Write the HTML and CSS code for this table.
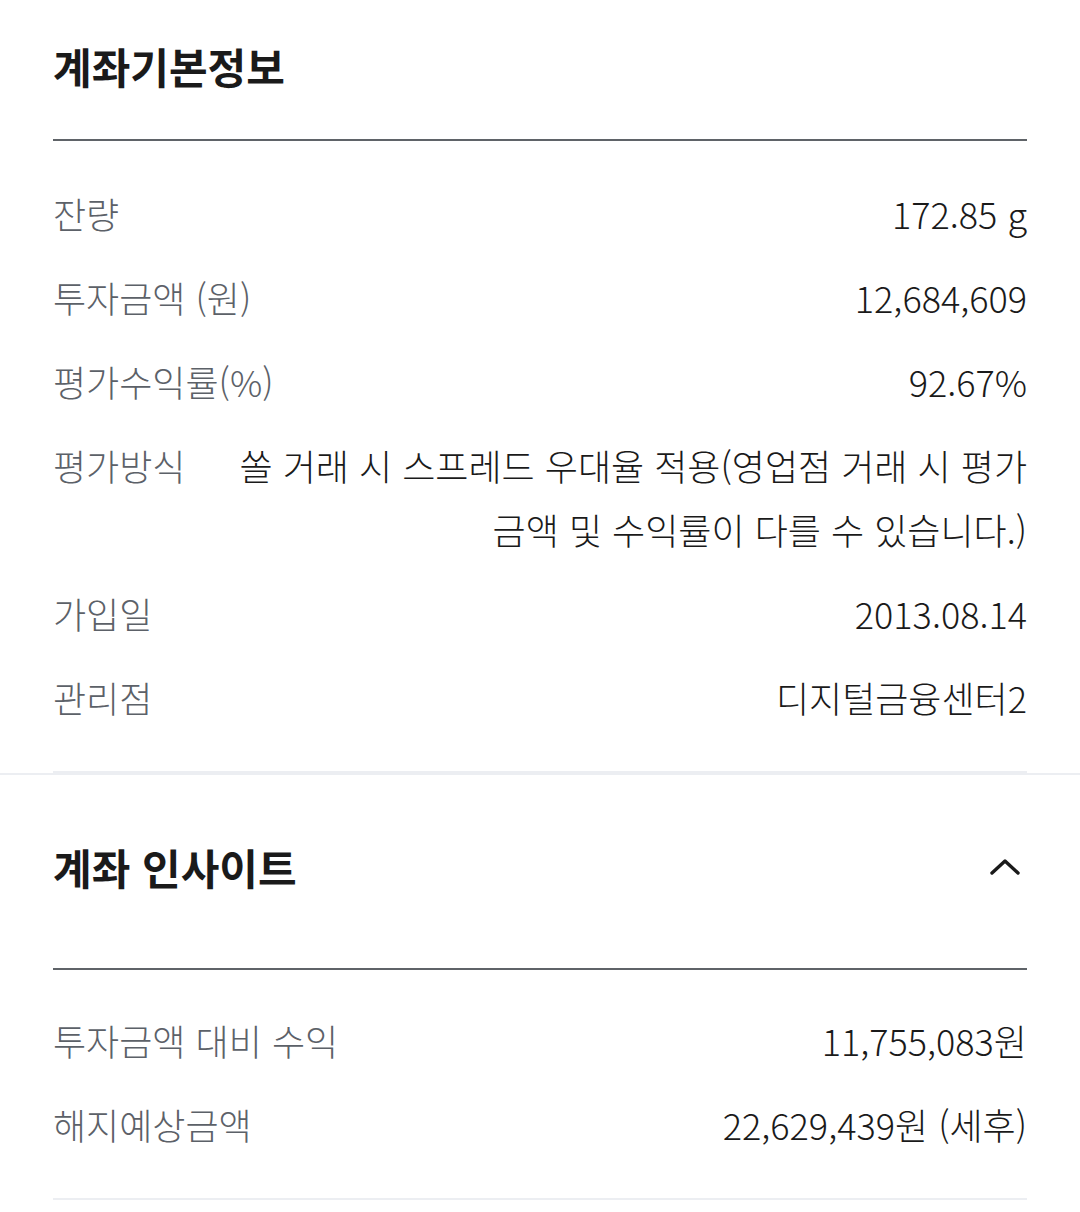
FILE: index.html
```html
<!DOCTYPE html>
<html lang="ko">

<head>
    <meta charset="UTF-8" />
    <meta name="viewport" content="width=device-width, initial-scale=1.0" />
    <title>계좌기본정보</title>
    <link rel="stylesheet" href="styles.css">
</head>

<body>
    <section class="section basic">
        <div class="section-head">
            <h2>계좌기본정보</h2>
        </div>
        <dl class="info-list">
            <div class="info-row">
                <dt>잔량</dt>
                <dd>172.85 g</dd>
            </div>
            <div class="info-row">
                <dt>투자금액 (원)</dt>
                <dd>12,684,609</dd>
            </div>
            <div class="info-row">
                <dt>평가수익률(%)</dt>
                <dd>92.67%</dd>
            </div>
            <div class="info-row">
                <dt>평가방식</dt>
                <dd class="wide">쏠 거래 시 스프레드 우대율 적용(영업점 거래 시 평가 금액 및 수익률이 다를 수 있습니다.)</dd>
            </div>
            <div class="info-row">
                <dt>가입일</dt>
                <dd>2013.08.14</dd>
            </div>
            <div class="info-row">
                <dt>관리점</dt>
                <dd>디지털금융센터2</dd>
            </div>
        </dl>
    </section>

    <section class="section insight">
        <div class="section-head">
            <h2>계좌 인사이트</h2>
            <button class="toggle" type="button" aria-label="접기">
                <svg width="34" height="20" viewBox="0 0 34 20">
                    <path d="M3 16 L16 4 L29 16" fill="none" stroke="#1a1a1a" stroke-width="3.4" stroke-linecap="round" stroke-linejoin="round" />
                </svg>
            </button>
        </div>
        <dl class="info-list">
            <div class="info-row">
                <dt>투자금액 대비 수익</dt>
                <dd>11,755,083원</dd>
            </div>
            <div class="info-row">
                <dt>해지예상금액</dt>
                <dd>22,629,439원 (세후)</dd>
            </div>
        </dl>
    </section>
</body>

</html>
```

FILE: styles.css
```css
body {
    margin: 0;
    padding: 0;
    background: #ffffff;
    font-family: "Noto Sans CJK KR", "Noto Sans", sans-serif;
    color: #1a1a1a;
}

.section {
    padding: 0 53px;
}

.basic {
    border-bottom: 2px solid #eceef2;
}

.section-head {
    display: flex;
    align-items: center;
    justify-content: space-between;
    border-bottom: 2px solid #5f6368;
}

.basic .section-head {
    padding: 38px 0 45px;
}

.insight .section-head {
    padding: 64px 0 73px;
}

h2 {
    margin: 0;
    font-size: 42px;
    line-height: 56px;
    font-weight: 700;
}

.toggle {
    border: none;
    background: none;
    padding: 0;
    margin-right: 4px;
    display: flex;
    cursor: pointer;
}

.info-list {
    margin: 0;
    padding: 30px 0 32px;
    border-bottom: 2px solid #eceef2;
}

.insight .info-list {
    padding: 28px 0 32px;
}

.info-row {
    display: flex;
    justify-content: space-between;
    align-items: flex-start;
    padding: 10px 0;
    font-size: 36px;
    line-height: 64px;
    font-weight: 300;
}

.info-row dt {
    flex: 0 0 auto;
    color: #5c6168;
}

.info-row dd {
    margin: 0 0 0 50px;
    flex: 1;
    text-align: right;
}
```
